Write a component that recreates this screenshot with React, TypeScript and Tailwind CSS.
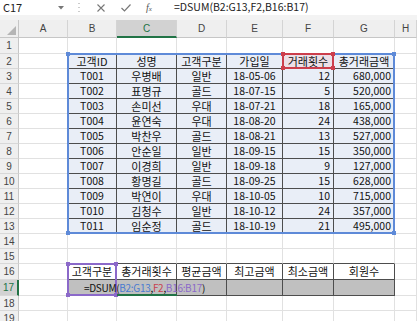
import React from 'react';

const LETTERS = ['', 'A', 'B', 'C', 'D', 'E', 'F', 'G', 'H'];

const HEAD2 = ['고객ID', '성명', '고객구분', '가입일', '거래횟수', '총거래금액'];
const DATA: string[][] = [
  ['T001', '우병배', '일반', '18-05-06', '12', '680,000'],
  ['T002', '표명규', '골드', '18-07-15', '5', '520,000'],
  ['T003', '손미선', '우대', '18-07-21', '18', '165,000'],
  ['T004', '윤연숙', '우대', '18-08-20', '24', '438,000'],
  ['T005', '박찬우', '골드', '18-08-21', '13', '527,000'],
  ['T006', '안순일', '일반', '18-09-15', '15', '350,000'],
  ['T007', '이경희', '일반', '18-09-18', '9', '127,000'],
  ['T008', '황명길', '골드', '18-09-25', '15', '628,000'],
  ['T009', '박연이', '우대', '18-10-05', '10', '715,000'],
  ['T010', '김청수', '일반', '18-10-12', '24', '357,000'],
  ['T011', '임순정', '골드', '18-10-19', '21', '495,000'],
];
const HEAD16 = ['고객구분', '총거래횟수', '평균금액', '최고금액', '최소금액', '회원수'];

const ROWS = Array.from({ length: 19 }, (_, i) => i + 1);
const COLS = [1, 2, 3, 4, 5, 6, 7, 8];

function inTable(r: number, c: number) {
  return c >= 2 && c <= 7 && ((r >= 2 && r <= 13) || (r >= 16 && r <= 17));
}

function content(r: number, c: number): string {
  if (c < 2 || c > 7) return '';
  if (r === 2) return HEAD2[c - 2];
  if (r >= 3 && r <= 13) return DATA[r - 3][c - 2];
  if (r === 16) return HEAD16[c - 2];
  return '';
}

function Handle({ pos, color }: { pos: string; color: string }) {
  return <div className={`absolute w-[4px] h-[4px] ${pos} ${color}`} />;
}

function Cell({ r, c }: { r: number; c: number }) {
  const tbl = inTable(r, c);
  const rightDark = tbl || (c === 1 && inTable(r, 2));
  const bottomDark = tbl || (c >= 2 && c <= 7 && (r === 1 || r === 15));
  let bg = 'bg-white';
  if (r >= 2 && r <= 13 && tbl) bg = 'bg-[#e9eef7]';
  if (r === 2 && c === 6) bg = 'bg-[#ecdfe7]';
  if (r === 17 && tbl) bg = 'bg-[#c0c0c0]';
  const text = content(r, c);
  const hangul = /[\uac00-\ud7a3]/.test(text);
  const right = r >= 3 && r <= 13 && (c === 6 || c === 7);
  return (
    <div
      className={`relative border-r border-b ${rightDark ? 'border-r-[#4d4d4d]' : 'border-r-[#e1e1e1]'} ${
        bottomDark ? 'border-b-[#4d4d4d]' : 'border-b-[#e1e1e1]'
      } ${bg} flex items-center ${right ? 'justify-end pr-[3px]' : 'justify-center'} ${
        hangul ? 'text-[11px]' : 'text-[10.5px]'
      } leading-none text-[#111] whitespace-nowrap`}
    >
      {text}
      {r === 2 && c === 2 && (
        <div className="absolute -left-[1px] -top-[1px] w-[328px] h-[181px] border-2 border-[#5e8ad8] z-10 pointer-events-none">
          <Handle pos="-left-[3px] -top-[3px]" color="bg-[#5e8ad8]" />
          <Handle pos="-right-[3px] -top-[3px]" color="bg-[#5e8ad8]" />
          <Handle pos="-left-[3px] -bottom-[3px]" color="bg-[#5e8ad8]" />
          <Handle pos="-right-[3px] -bottom-[3px]" color="bg-[#5e8ad8]" />
        </div>
      )}
      {r === 2 && c === 6 && (
        <div className="absolute -left-[1px] -top-[1px] w-[52px] h-[16px] border-2 border-[#cc3e4c] z-20 pointer-events-none">
          <Handle pos="-left-[3px] -top-[3px]" color="bg-[#cc3e4c]" />
          <Handle pos="-right-[3px] -top-[3px]" color="bg-[#cc3e4c]" />
          <Handle pos="-left-[3px] -bottom-[3px]" color="bg-[#cc3e4c]" />
          <Handle pos="-right-[3px] -bottom-[3px]" color="bg-[#cc3e4c]" />
        </div>
      )}
      {r === 16 && c === 2 && (
        <div className="absolute -left-[1px] -top-[1px] w-[50px] h-[33px] border-2 border-[#8b69c9] z-20 pointer-events-none">
          <Handle pos="-left-[3px] -top-[3px]" color="bg-[#8b69c9]" />
          <Handle pos="-right-[3px] -top-[3px]" color="bg-[#8b69c9]" />
          <Handle pos="-left-[3px] -bottom-[3px]" color="bg-[#8b69c9]" />
          <Handle pos="-right-[3px] -bottom-[3px]" color="bg-[#8b69c9]" />
        </div>
      )}
      {r === 17 && c === 3 && (
        <>
          <div className="absolute left-0 -bottom-[1px] w-[60px] h-[2px] bg-[#217346] z-20" />
          <div className="absolute -left-[33px] top-0 h-full flex items-center whitespace-nowrap text-[10px] tracking-[-0.3px] z-30 text-[#111]">
            <span>=DSUM(</span>
            <span className="text-[#4a7bd0]">B2:G13</span>
            <span>,</span>
            <span className="text-[#c8414f]">F2</span>
            <span>,</span>
            <span className="text-[#8b69c9]">B16:B17</span>
            <span>)</span>
          </div>
        </>
      )}
    </div>
  );
}

function ColHeader({ c }: { c: number }) {
  const sel = c === 3;
  return (
    <div
      className={`flex items-center justify-center text-[10px] font-['Liberation_Sans',sans-serif] border-r border-r-[#d4d4d4] ${
        sel ? 'bg-[#d2d2d2] text-[#217346] border-b-2 border-b-[#217346]' : 'bg-[#efefef] text-[#444] border-b border-b-[#c6c6c6]'
      }`}
    >
      {LETTERS[c]}
    </div>
  );
}

function RowHeader({ r }: { r: number }) {
  const sel = r === 17;
  return (
    <div
      className={`flex items-center justify-center text-[10px] font-['Liberation_Sans',sans-serif] border-b border-b-[#d8d8d8] ${
        sel ? 'bg-[#d2d2d2] text-[#217346] border-r-2 border-r-[#217346]' : 'bg-[#efefef] text-[#444] border-r border-r-[#c6c6c6]'
      }`}
    >
      {r}
    </div>
  );
}

function FormulaBar() {
  return (
    <div className="h-[15px] flex items-center bg-white text-[#222]">
      <div className="w-[70px] h-full flex items-center justify-between pl-[3px] pr-[6px]">
        <span className="text-[11px] leading-none">C17</span>
        <svg width="6" height="4" viewBox="0 0 6 4">
          <path d="M0 0 L6 0 L3 3.5 Z" fill="#777" />
        </svg>
      </div>
      <div className="w-[18px] h-full flex items-center justify-center">
        <svg width="2" height="9" viewBox="0 0 2 9">
          <rect x="0.5" y="0" width="1" height="1" fill="#999" />
          <rect x="0.5" y="4" width="1" height="1" fill="#999" />
          <rect x="0.5" y="8" width="1" height="1" fill="#999" />
        </svg>
      </div>
      <div className="w-[26px] h-full flex items-center justify-center">
        <svg width="8" height="8" viewBox="0 0 8 8">
          <path d="M0.5 0.5 L7.5 7.5 M7.5 0.5 L0.5 7.5" stroke="#777" strokeWidth="1.1" />
        </svg>
      </div>
      <div className="w-[24px] h-full flex items-center justify-center">
        <svg width="10" height="8" viewBox="0 0 10 8">
          <path d="M0.5 4 L3.5 7 L9.5 0.5" stroke="#777" strokeWidth="1.2" fill="none" />
        </svg>
      </div>
      <div className="w-[22px] h-full flex items-center justify-center">
        <span className="font-['Liberation_Serif',serif] italic text-[10px] text-[#555] leading-none">
          f<span className="text-[7px]">x</span>
        </span>
      </div>
      <div className="flex-1 pl-[14px] text-[10.5px] leading-none whitespace-nowrap">=DSUM(B2:G13,F2,B16:B17)</div>
    </div>
  );
}

export default function App() {
  return (
    <div className="w-[417px] h-[321px] overflow-hidden bg-white font-['Noto_Sans_CJK_KR','Noto_Sans',sans-serif]">
      <FormulaBar />
      <div className="h-[5px] bg-[#f3f3f3]" />
      <div className="grid grid-cols-[19px_49px_49px_60px_50px_56px_51px_61px_22px] grid-rows-[18px_16px_repeat(14,15px)_16px_16px_15px_15px]">
        <div className="relative bg-[#efefef] border-r border-r-[#c6c6c6] border-b border-b-[#c6c6c6]">
          <svg className="absolute right-[2px] bottom-[2px]" width="9" height="9" viewBox="0 0 9 9">
            <path d="M9 0 L9 9 L0 9 Z" fill="#b5b5b5" />
          </svg>
        </div>
        {COLS.map((c) => (
          <ColHeader key={`h${c}`} c={c} />
        ))}
        {ROWS.map((r) => (
          <React.Fragment key={r}>
            <RowHeader r={r} />
            {COLS.map((c) => (
              <Cell key={`${r}-${c}`} r={r} c={c} />
            ))}
          </React.Fragment>
        ))}
      </div>
    </div>
  );
}
